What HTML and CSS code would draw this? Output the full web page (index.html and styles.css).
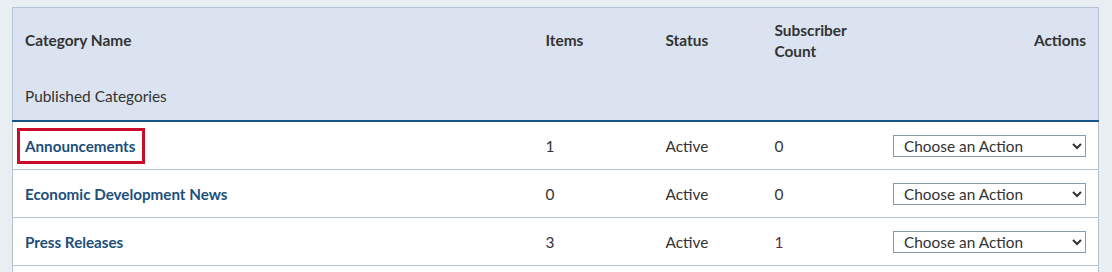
FILE: index.html
```html
<!DOCTYPE html>
<html lang="en">
<head>
<meta charset="utf-8">
<title>Categories</title>
<link rel="stylesheet" href="styles.css">
</head>
<body>
<table class="cat-table">
  <colgroup>
    <col class="c-name">
    <col class="c-items">
    <col class="c-status">
    <col class="c-subs">
    <col class="c-actions">
  </colgroup>
  <thead>
    <tr class="head-row">
      <th>Category Name</th>
      <th>Items</th>
      <th>Status</th>
      <th>Subscriber<br>Count</th>
      <th class="right">Actions</th>
    </tr>
    <tr class="group-row">
      <th colspan="5">Published Categories</th>
    </tr>
  </thead>
  <tbody>
    <tr>
      <td><a href="#" class="cat-link highlighted">Announcements</a></td>
      <td>1</td>
      <td>Active</td>
      <td>0</td>
      <td class="right"><select class="action-select"><option>Choose an Action</option></select></td>
    </tr>
    <tr>
      <td><a href="#" class="cat-link">Economic Development News</a></td>
      <td>0</td>
      <td>Active</td>
      <td>0</td>
      <td class="right"><select class="action-select"><option>Choose an Action</option></select></td>
    </tr>
    <tr>
      <td><a href="#" class="cat-link">Press Releases</a></td>
      <td>3</td>
      <td>Active</td>
      <td><a href="#" class="count-link">1</a></td>
      <td class="right"><select class="action-select"><option>Choose an Action</option></select></td>
    </tr>
    <tr class="filler">
      <td colspan="5"></td>
    </tr>
  </tbody>
</table>
</body>
</html>
```
FILE: styles.css
```css
html, body {
  margin: 0;
  background: #e9eef3;
}
body {
  padding: 7px 13px 0 12px;
  font-family: Lato, "Open Sans", sans-serif;
  font-size: 15.4px;
  color: #333;
}
.cat-table {
  width: 100%;
  border-collapse: collapse;
  table-layout: fixed;
  background: #fff;
  border: 1px solid #b4c3d3;
}
.c-name { width: 521px; }
.c-items { width: 120px; }
.c-status { width: 109px; }
.c-subs { width: 118px; }
.c-actions { width: auto; }

thead {
  background: #dae3ef;
}
th {
  text-align: left;
  font-weight: 700;
  padding: 0 12px;
  line-height: 21px;
  vertical-align: middle;
}
.head-row th {
  height: 65px;
  padding-top: 0;
}
.group-row th {
  font-weight: 400;
  height: 47px;
  border-bottom: 2px solid #17548a;
  padding-top: 0;
}
td {
  padding: 0 12px;
  height: 47px;
  border-bottom: 1px solid #b4c3d3;
  vertical-align: middle;
  line-height: 20px;
}
.right { text-align: right; }

.cat-link {
  color: #1c4f7c;
  font-weight: 700;
  font-size: 15.2px;
  text-decoration: none;
}
.highlighted {
  display: inline-block;
  outline: 3px solid #cc0a2a;
  outline-offset: 5px;
  padding-right: 2px;
}
.count-link {
  color: #6e1d4d;
  text-decoration: none;
}
.action-select {
  width: 193px;
  height: 22px;
  font-family: inherit;
  font-size: 15.4px;
  color: #333;
  background: #fff;
  border: 1px solid #8c99a8;
  border-radius: 0;
  padding: 0 0 0 6px;
}
.filler td {
  height: 10px;
  border-bottom: none;
}
```
